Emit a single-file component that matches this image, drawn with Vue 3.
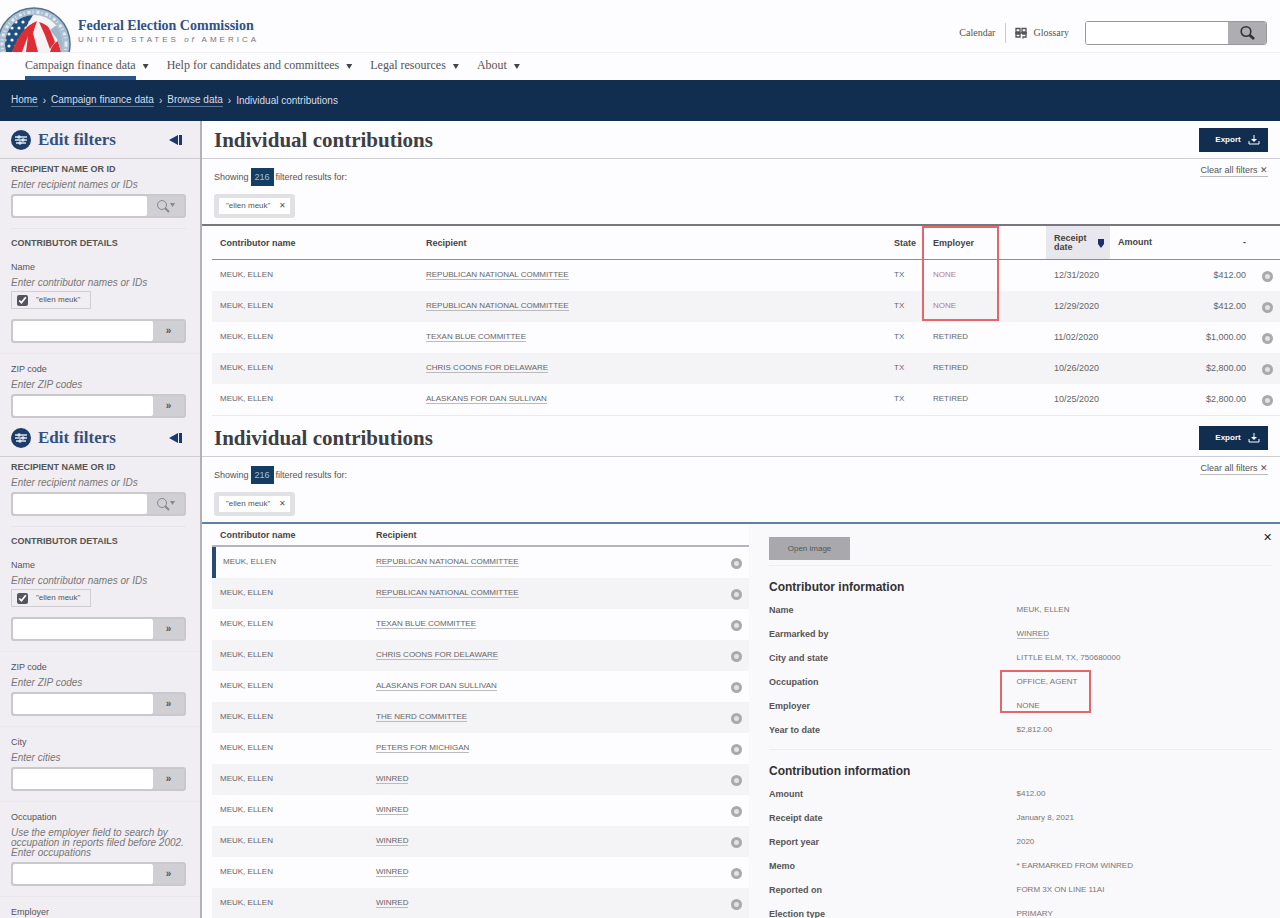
<template>
    <div class="page">
        <header class="site-header">
            <div class="masthead">
                <a class="brand" href="#">
                    <svg class="seal" viewBox="0 0 72 46" width="72" height="46" aria-hidden="true">
                        <defs>
                            <clipPath id="sealInner">
                                <circle cx="34" cy="38" r="29" />
                            </clipPath>
                        </defs>
                        <circle cx="34" cy="38" r="36" fill="#a9bfd1" stroke="#55718c" stroke-width="1.5" />
                        <circle cx="34" cy="38" r="32" fill="none" stroke="#dfe9f0" stroke-width="3" stroke-dasharray="3 2 1 3" />
                        <g clip-path="url(#sealInner)">
                            <rect width="72" height="46" fill="#f6f3f5" />
                            <path d="M0 0H38L12 46H0z" fill="#205080" />
                            <g fill="#f1f5fa">
                                <circle v-for="star in stars" :key="star.id" :cx="star.x" :cy="star.y" r="1.6" />
                            </g>
                            <path d="M12 46Q20 22 37 15L33 27L38 46H26L28 30L22 46z" fill="#dd2d35" />
                            <path d="M39 16Q48 18 51 26L55 36L50 43Q45 28 39 16z" fill="#dd2d35" />
                            <path d="M50 46Q52 38 58 35L61 46z" fill="#dd2d35" />
                            <path d="M50 24L66 12V46H61L57 33z" fill="#9fb6c9" />
                        </g>
                    </svg>
                    <span class="brand-text">
                        <span class="brand-name">Federal Election Commission</span>
                        <span class="brand-sub">UNITED STATES <i>of</i> AMERICA</span>
                    </span>
                </a>
                <div class="utility">
                    <a class="utility-link" href="#">Calendar</a>
                    <button type="button" class="utility-link glossary">
                        <svg viewBox="0 0 12 12" width="12" height="12" fill="none" stroke="#555" stroke-width="1.3" aria-hidden="true">
                            <path d="M1 1.5H5V5H1zM7 1.5H11V5H7zM1 7H5V10H1zM7 7H11V10H8V11.5M0 6H12" />
                        </svg>
                        Glossary
                    </button>
                    <form class="site-search" @submit.prevent>
                        <input v-model="siteSearch" type="text" aria-label="Search the site">
                        <button type="submit" aria-label="Search">
                            <svg viewBox="0 0 16 16" width="16" height="16" fill="none" stroke="#333" aria-hidden="true">
                                <circle cx="7" cy="6.500" r="4.800" stroke-width="1.6" />
                                <path d="M10.500 10L15 14" stroke-width="2.800" />
                            </svg>
                        </button>
                    </form>
                </div>
            </div>
            <nav class="main-nav">
                <a v-for="(item, index) in navItems" :key="item" href="#" :class="{ current: index === 0 }">
                    <span class="nav-label">{{ item }}</span>
                    <span class="nav-caret"></span>
                </a>
            </nav>
        </header>

        <div class="breadcrumbs">
            <template v-for="crumb in crumbs" :key="crumb">
                <a href="#">{{ crumb }}</a>
                <span class="crumb-sep">›</span>
            </template>
            <span>Individual contributions</span>
        </div>

        <section v-for="view in views" :key="view.id" class="view" :class="{ 'with-detail': view.detail }">
            <aside class="filters">
                <div class="filters-header">
                    <svg viewBox="0 0 20 20" width="20" height="20" aria-hidden="true">
                        <circle cx="10" cy="10" r="10" fill="#1d3c69" />
                        <path d="M4 7H16M4 10H16M5 13H15" stroke="#dbe4ef" stroke-width="1.3" />
                        <circle cx="8" cy="7" r="1.700" fill="#dbe4ef" />
                        <circle cx="12" cy="10" r="1.700" fill="#dbe4ef" />
                        <circle cx="9" cy="13" r="1.700" fill="#dbe4ef" />
                    </svg>
                    <h2>Edit filters</h2>
                    <button type="button" class="collapse" aria-label="Hide filters">
                        <svg viewBox="0 0 14 10" width="14" height="10" fill="#173a70" aria-hidden="true">
                            <path d="M0 5L9 0V10zM10 0H13V10H10z" />
                        </svg>
                    </button>
                </div>
                <div class="field first">
                    <label class="heading-label" :for="view.id + '-recipient'">RECIPIENT NAME OR ID</label>
                    <p class="help">Enter recipient names or IDs</p>
                    <div class="combo wide">
                        <input :id="view.id + '-recipient'" type="text">
                        <button type="button" aria-label="Search recipients">
                            <svg viewBox="0 0 20 14" width="20" height="14" fill="none" stroke="#888" aria-hidden="true">
                                <circle cx="6" cy="6" r="4.500" />
                                <path d="M9 9L13 13" stroke-width="2" />
                                <path d="M14 4H19L16.500 8z" fill="#888" stroke="none" />
                            </svg>
                        </button>
                    </div>
                </div>
                <h3 class="group-title">CONTRIBUTOR DETAILS</h3>
                <div class="field name-field">
                    <label :for="view.id + '-name'">Name</label>
                    <p class="help">Enter contributor names or IDs</p>
                    <label class="picked">
                        <input type="checkbox" checked>
                        <span>"ellen meuk"</span>
                    </label>
                    <div class="combo">
                        <input :id="view.id + '-name'" type="text">
                        <button type="button" aria-label="Add name">»</button>
                    </div>
                </div>
                <div v-for="field in view.fields" :key="field.id" class="field ruled">
                    <label :for="view.id + field.id">{{ field.label }}</label>
                    <p v-if="field.help" class="help">{{ field.help }}</p>
                    <div class="combo">
                        <input :id="view.id + field.id" type="text">
                        <button type="button" :aria-label="'Add ' + field.label"><span v-if="field.help">»</span></button>
                    </div>
                </div>
            </aside>

            <main class="results">
                <div class="results-header">
                    <h1>Individual contributions</h1>
                    <button type="button" class="export">
                        Export
                        <svg viewBox="0 0 12 10" width="12" height="10" fill="none" stroke="#fff" aria-hidden="true">
                            <path d="M1 6V9H11V6M6 0V5" />
                            <path d="M3 4H9L6 7z" fill="#fff" stroke="none" />
                        </svg>
                    </button>
                </div>
                <div class="summary">
                    <div>
                        <p class="count">Showing <b>216</b> filtered results for:</p>
                        <div class="tag-wrap">
                            <button type="button" class="tag">"ellen meuk" <span>✕</span></button>
                        </div>
                    </div>
                    <button type="button" class="clear">Clear all filters <span>✕</span></button>
                </div>

                <table v-if="!view.detail" class="data full">
                    <thead>
                        <tr>
                            <th class="col-name">Contributor name</th>
                            <th>Recipient</th>
                            <th class="col-state">State</th>
                            <th class="col-employer">Employer<span class="mark mark-column"></span></th>
                            <th class="col-date">
                                <div class="sorted">Receipt date
                                    <svg viewBox="0 0 6 10" width="6" height="10" fill="#1b2f6b" aria-hidden="true">
                                        <path d="M0 1H6V6L3 10L0 6z" />
                                    </svg>
                                </div>
                            </th>
                            <th class="col-amount"><div class="sortable">Amount <span>-</span></div></th>
                            <th class="col-open"></th>
                        </tr>
                    </thead>
                    <tbody>
                        <tr v-for="(row, index) in contributions.slice(0, 5)" :key="index">
                            <td>MEUK, ELLEN</td>
                            <td><a href="#">{{ row.recipient }}</a></td>
                            <td>TX</td>
                            <td :class="{ flagged: index < 2 }">{{ row.employer }}</td>
                            <td class="number">{{ row.date }}</td>
                            <td class="number amount">{{ row.amount }}</td>
                            <td class="open-cell"><button type="button" class="open" aria-label="Toggle details"></button></td>
                        </tr>
                    </tbody>
                </table>

                <div v-else class="split">
                    <table class="data compact">
                        <thead>
                            <tr>
                                <th class="col-short">Contributor name</th>
                                <th>Recipient</th>
                                <th class="col-open"></th>
                            </tr>
                        </thead>
                        <tbody>
                            <tr v-for="(row, index) in contributions" :key="index" :class="{ active: index === 0 }">
                                <td>MEUK, ELLEN</td>
                                <td><a href="#">{{ row.recipient }}</a></td>
                                <td class="open-cell"><button type="button" class="open" aria-label="Toggle details"></button></td>
                            </tr>
                        </tbody>
                    </table>
                    <div class="detail">
                        <div class="detail-top">
                            <button type="button" class="image-btn">Open image</button>
                            <button type="button" class="close" aria-label="Close details">✕</button>
                        </div>
                        <section v-for="group in details" :key="group.title" class="detail-group">
                            <h2>{{ group.title }}</h2>
                            <dl>
                                <div v-for="line in group.lines" :key="line.label">
                                    <dt>{{ line.label }}</dt>
                                    <dd>
                                        <a v-if="line.link" href="#">{{ line.value }}</a>
                                        <template v-else>{{ line.value }}</template>
                                        <span v-if="line.marked" class="mark mark-pair"></span>
                                    </dd>
                                </div>
                            </dl>
                        </section>
                    </div>
                </div>
            </main>
        </section>
    </div>
</template>

<script setup>
import { ref } from 'vue'

const siteSearch = ref('')

const navItems = ['Campaign finance data', 'Help for candidates and committees', 'Legal resources', 'About']
const crumbs = ['Home', 'Campaign finance data', 'Browse data']

const stars = []
for (let i = 0; i < 30; i++) {
    const line = Math.floor(i / 6)
    stars.push({ id: i, x: 2 + (i % 6) * 7 + (line % 2) * 3, y: 16 + line * 6 })
}

const zip = { id: '-zip', label: 'ZIP code', help: 'Enter ZIP codes' }
const views = [
    { id: 'table', detail: false, fields: [zip] },
    {
        id: 'detail',
        detail: true,
        fields: [
            zip,
            { id: '-city', label: 'City', help: 'Enter cities' },
            {
                id: '-occupation',
                label: 'Occupation',
                help: 'Use the employer field to search by occupation in reports filed before 2002. Enter occupations',
            },
            { id: '-employer', label: 'Employer' },
        ],
    },
]

const contributions = [
    { recipient: 'REPUBLICAN NATIONAL COMMITTEE', employer: 'NONE', date: '12/31/2020', amount: '$412.00' },
    { recipient: 'REPUBLICAN NATIONAL COMMITTEE', employer: 'NONE', date: '12/29/2020', amount: '$412.00' },
    { recipient: 'TEXAN BLUE COMMITTEE', employer: 'RETIRED', date: '11/02/2020', amount: '$1,000.00' },
    { recipient: 'CHRIS COONS FOR DELAWARE', employer: 'RETIRED', date: '10/26/2020', amount: '$2,800.00' },
    { recipient: 'ALASKANS FOR DAN SULLIVAN', employer: 'RETIRED', date: '10/25/2020', amount: '$2,800.00' },
    { recipient: 'THE NERD COMMITTEE' },
    { recipient: 'PETERS FOR MICHIGAN' },
    { recipient: 'WINRED' },
    { recipient: 'WINRED' },
    { recipient: 'WINRED' },
    { recipient: 'WINRED' },
    { recipient: 'WINRED' },
]

const details = [
    {
        title: 'Contributor information',
        lines: [
            { label: 'Name', value: 'MEUK, ELLEN' },
            { label: 'Earmarked by', value: 'WINRED', link: true },
            { label: 'City and state', value: 'LITTLE ELM, TX, 750680000' },
            { label: 'Occupation', value: 'OFFICE, AGENT', marked: true },
            { label: 'Employer', value: 'NONE' },
            { label: 'Year to date', value: '$2,812.00' },
        ],
    },
    {
        title: 'Contribution information',
        lines: [
            { label: 'Amount', value: '$412.00' },
            { label: 'Receipt date', value: 'January 8, 2021' },
            { label: 'Report year', value: '2020' },
            { label: 'Memo', value: '* EARMARKED FROM WINRED' },
            { label: 'Reported on', value: 'FORM 3X ON LINE 11AI' },
            { label: 'Election type', value: 'PRIMARY' },
        ],
    },
]
</script>

<style>
body {
    margin: 0;
}
</style>

<style scoped>
.page {
    height: 100vh;
    overflow: hidden;
    display: flex;
    flex-direction: column;
    background: #fdfcfe;
    color: #555;
    font: 8px/12px "Liberation Sans", Arial, sans-serif;
}

.page * {
    box-sizing: border-box;
}

h1, h2, h3, p, dl, dd {
    margin: 0;
}

button, input {
    font: inherit;
    color: inherit;
    border: 0;
    padding: 0;
    margin: 0;
    min-width: 0;
    background: none;
}

button {
    cursor: pointer;
}

a {
    color: inherit;
    text-decoration: none;
}

svg {
    display: block;
    flex: none;
}

/* site header */
.site-header {
    flex: none;
    height: 80px;
}

.masthead {
    height: 53px;
    display: flex;
    justify-content: space-between;
    border-bottom: 1px solid #f3f1f5;
}

.brand {
    display: flex;
    align-items: flex-end;
    gap: 6px;
}

.brand-text {
    display: flex;
    flex-direction: column;
    padding-bottom: 7px;
}

.brand-name {
    color: #2f5289;
    font: bold 14px/18px "Liberation Serif", serif;
}

.brand-sub {
    font-size: 8px;
    line-height: 10px;
    letter-spacing: 3px;
    color: #777;
}

.utility {
    display: flex;
    align-items: center;
    padding: 13px 13px 0 0;
    height: 53px;
}

.utility-link {
    font: 10px/20px "Liberation Serif", serif;
    padding-right: 10px;
}

.glossary {
    display: flex;
    align-items: center;
    gap: 6px;
    padding: 0 16px 0 9px;
    border-left: 1px solid #ccc;
}

.site-search {
    display: flex;
    width: 182px;
    height: 24px;
    border: 1px solid #98979c;
    border-radius: 3px;
    overflow: hidden;
}

.site-search input {
    flex: 1;
    background: #fff;
}

.site-search button {
    width: 38px;
    display: flex;
    align-items: center;
    justify-content: center;
    background: #aeadb2;
}

.main-nav {
    display: flex;
    gap: 18px;
    height: 27px;
    padding-left: 25px;
    font: 12px/24px "Liberation Serif", serif;
}

.main-nav a {
    display: flex;
    gap: 7px;
}

.main-nav .current .nav-label {
    border-bottom: 4px solid #28568b;
}

.nav-caret {
    width: 6px;
    height: 5px;
    margin-top: 11px;
    background: #444;
    clip-path: polygon(0 0, 100% 0, 50% 100%);
}

.breadcrumbs {
    flex: none;
    display: flex;
    align-items: center;
    gap: 5px;
    height: 41px;
    padding-left: 11px;
    color: #d5deea;
    background: #112e51;
    font-size: 10px;
}

.breadcrumbs a {
    border-bottom: 1px solid #60789a;
}

/* filter column */
.view {
    flex: none;
    display: flex;
    height: 298px;
}

.view.with-detail {
    flex: 1;
    min-height: 0;
}

.filters {
    flex: none;
    width: 202px;
    overflow: hidden;
    background: #f0eef2;
    border-right: 2px solid #b2b1b8;
}

.filters-header {
    display: flex;
    align-items: center;
    height: 38px;
    padding: 0 17px 0 11px;
    border-bottom: 1px solid #cfced4;
}

.filters-header h2 {
    flex: 1;
    margin-left: 7px;
    color: #35507f;
    font: bold 17px/24px "Liberation Serif", serif;
}

.field {
    display: flex;
    flex-direction: column;
    padding: 0 14px 10px 11px;
    font-size: 9px;
}

.field.first {
    padding-top: 4px;
}

.heading-label {
    font-weight: bold;
}

.help {
    margin: 4px 0 3px;
    font-size: 10px;
    font-style: italic;
    line-height: 10px;
    padding: 1px 0;
    color: #777;
}

.combo {
    display: flex;
    height: 24px;
    border: 2px solid #c9c8cd;
    border-radius: 3px;
    background: #d0cfd3;
}

.combo input {
    flex: 1;
    background: #fff;
    border-radius: 2px;
}

.combo button {
    display: flex;
    align-items: center;
    justify-content: center;
    width: 31px;
    font-size: 10px;
    font-weight: bold;
}

.combo.wide button {
    width: 37px;
}

.group-title {
    border-top: 1px solid #e7e5e9;
    margin: 0 14px 12px 11px;
    padding-top: 8px;
    font-size: 9px;
    line-height: 12px;
}

.name-field .help {
    margin-bottom: 2px;
}

.picked {
    display: flex;
    align-items: center;
    align-self: flex-start;
    gap: 8px;
    height: 18px;
    width: 80px;
    margin-bottom: 10px;
    padding-left: 5px;
    border: 1px solid #cfced3;
    font-size: 8px;
}

.picked input {
    width: 11px;
    height: 11px;
    accent-color: #555560;
}

.field.ruled {
    padding-top: 9px;
    border-top: 1px solid #eae8ec;
}

/* results */
.results {
    flex: 1;
    min-width: 0;
    display: flex;
    flex-direction: column;
}

.results-header {
    flex: none;
    display: flex;
    align-items: center;
    justify-content: space-between;
    height: 38px;
    padding: 0 12px;
    border-bottom: 1px solid #cfced4;
}

.results-header h1 {
    color: #3f3e42;
    font: bold 21px/28px "Liberation Serif", serif;
}

.export {
    display: flex;
    align-items: center;
    justify-content: center;
    gap: 7px;
    width: 69px;
    height: 24px;
    padding-left: 8px;
    color: #fff;
    background: #112e51;
    font-weight: bold;
}

.summary {
    flex: none;
    display: flex;
    align-items: flex-start;
    justify-content: space-between;
    height: 67px;
    padding: 0 12px;
    border-bottom: 2px solid #77777d;
}

.with-detail .summary {
    border-bottom-color: #5f829c;
}

.count {
    display: flex;
    align-items: center;
    gap: 2px;
    padding-top: 9px;
    font-size: 9px;
}

.count b {
    width: 23px;
    line-height: 18px;
    text-align: center;
    color: #a9bfd2;
    background: #123e66;
    font-weight: normal;
}

.tag-wrap {
    width: 81px;
    height: 24px;
    margin-top: 8px;
    padding: 4px 5px;
    border-radius: 3px;
    background: #e1e0e5;
}

.tag {
    display: flex;
    align-items: center;
    justify-content: space-between;
    width: 71px;
    height: 16px;
    padding: 0 4px 0 7px;
    background: #fff;
}

.clear {
    margin-top: 5px;
    border-bottom: 1px solid #bbb;
    font-size: 9px;
}

.data {
    table-layout: fixed;
    border-collapse: separate;
    border-spacing: 0;
    color: #666;
}

.data th {
    padding: 0 8px;
    text-align: left;
    color: #444;
    font-size: 9px;
}

.data td {
    height: 31px;
    padding: 0 8px 2px;
}

.data tbody tr:nth-child(even) {
    background: #f4f3f6;
}

.data a {
    border-bottom: 1px solid #bbb;
}

.full {
    width: calc(100% - 10px);
    margin-left: 10px;
    border-bottom: 1px solid #eae9ed;
}

.full th {
    height: 34px;
    border-bottom: 1px solid #8e8d92;
}

.col-name {
    width: 206px;
}

.col-short {
    width: 156px;
}

.col-state {
    width: 39px;
}

.col-employer {
    width: 121px;
    position: relative;
}

.data .col-date {
    width: 64px;
    padding-right: 6px;
    background: #e8e7ed;
}

.col-amount {
    width: 144px;
}

.data .col-open {
    width: 26px;
    padding: 0;
}

.sorted, .sortable {
    display: flex;
    align-items: center;
    justify-content: space-between;
    line-height: 9px;
}

.data .number {
    font-size: 9px;
}

.data .amount {
    text-align: right;
}

.data .flagged {
    color: #b07d86;
}

.data .open-cell {
    padding: 2px 0 0;
}

.open {
    display: block;
    width: 11px;
    height: 11px;
    margin: 0 auto;
    border: 3px solid #aaa9ac;
    border-radius: 50%;
    background: #e3e3e4;
}

.mark {
    position: absolute;
    border: 2px solid #e4666a;
}

.mark-column {
    top: 0;
    left: -3px;
    width: 77px;
    height: 95px;
}

/* detail view */
.split {
    flex: 1;
    min-height: 0;
    display: grid;
    grid-template-columns: 1fr 1fr;
    align-items: start;
    overflow: hidden;
}

.compact {
    width: calc(100% - 2px);
    margin-left: 10px;
}

.compact th {
    height: 23px;
    border-bottom: 2px solid #b6b4c4;
}

.compact .active td:first-child {
    padding-left: 7px;
    border-left: 4px solid #2b4a70;
}

.detail {
    height: 100%;
    min-height: 394px;
    margin-left: 8px;
    padding: 13px 8px 0 20px;
    background: #f9f8fb;
}

.detail-top {
    display: flex;
    align-items: flex-start;
    justify-content: space-between;
    height: 29px;
    border-bottom: 1px solid #f0eef2;
}

.image-btn {
    width: 81px;
    height: 23px;
    background: #a9a8ac;
}

.close {
    margin-top: -6px;
    font-size: 11px;
    color: #222;
}

.detail-group + .detail-group {
    border-top: 1px solid #efedf1;
}

.detail-group h2 {
    padding: 13px 0 3px;
    color: #333;
    font-size: 12px;
    line-height: 16px;
}

.detail-group dl {
    padding-bottom: 7px;
}

.detail-group dl div {
    display: grid;
    grid-template-columns: 1fr 1fr;
    padding-right: 8px;
    line-height: 24px;
}

.detail-group dt {
    font-size: 9px;
    font-weight: bold;
}

.detail-group dd {
    position: relative;
    color: #777;
}

.detail-group dd a {
    border-bottom: 1px solid #bbb;
}

.mark-pair {
    top: 0;
    left: -17px;
    width: 91px;
    height: 43px;
}
</style>
